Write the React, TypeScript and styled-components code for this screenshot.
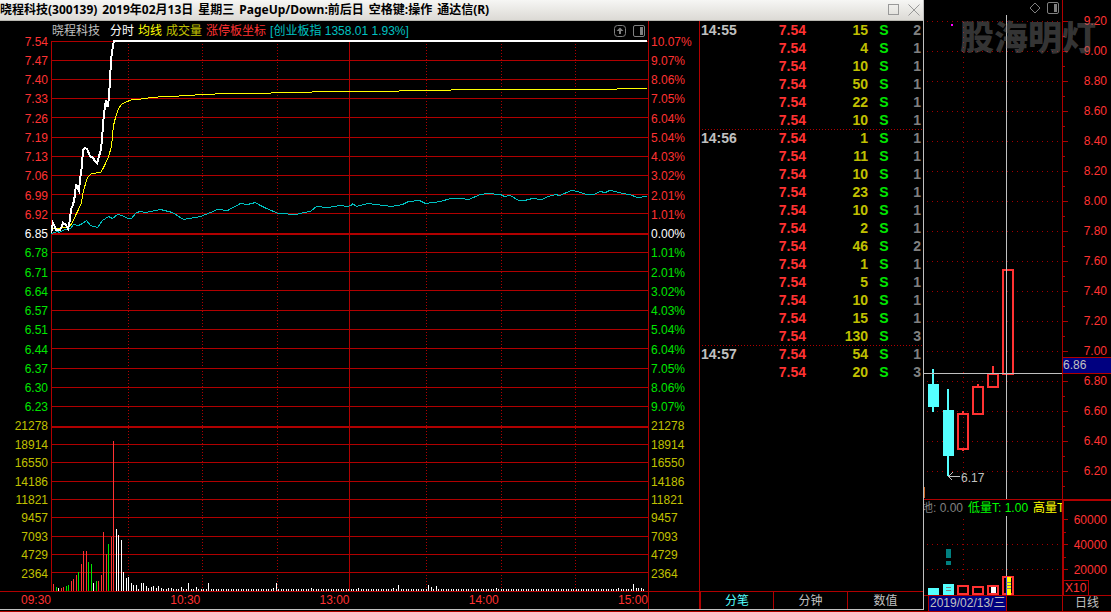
import React from "react";
import styled, { createGlobalStyle } from "styled-components";

const color = {
  grid: "#b00000",
  gridDim: "#a00000",
  up: "#ff3232",
  down: "#00e600",
  volume: "#c0c000",
  average: "#ffff00",
  index: "#00c0c0",
  cyan: "#54ffff",
  text: "#c0c0c0",
  muted: "#808080",
  navy: "#000080",
};

const GlobalStyle = createGlobalStyle`
  *, *::before, *::after { box-sizing: border-box; }
  body {
    margin: 0;
    background: #000;
    color: ${color.text};
    font: 12px/16px "Liberation Sans", "Noto Sans CJK SC", sans-serif;
  }
  button { font: inherit; color: inherit; background: none; border: 0; padding: 0; margin: 0; }
`;

/* ---------- data ---------- */

const titleParts = [
  "晓程科技(300139)",
  "2019年02月13日",
  "星期三",
  "PageUp/Down:前后日",
  "空格键:操作",
  "通达信(R)",
];

const priceLabels = [
  "7.54", "7.47", "7.40", "7.33", "7.26", "7.19", "7.13", "7.06", "6.99", "6.92",
  "6.85", "6.78", "6.71", "6.64", "6.57", "6.51", "6.44", "6.37", "6.30", "6.23",
];
const percentLabels = [
  "10.07%", "9.07%", "8.06%", "7.05%", "6.04%", "5.04%", "4.03%", "3.02%", "2.01%", "1.01%",
  "0.00%", "1.01%", "2.01%", "3.02%", "4.03%", "5.04%", "6.04%", "7.05%", "8.06%", "9.07%",
];
const volumeLabels = ["21278", "18914", "16550", "14186", "11821", "9457", "7093", "4729", "2364"];
const timeLabels = ["09:30", "10:30", "13:00", "14:00", "15:00"];

type Trade = { time?: string; volume: number; count: number };
const trades: Trade[] = [
  { time: "14:55", volume: 15, count: 2 },
  { volume: 4, count: 1 },
  { volume: 10, count: 1 },
  { volume: 50, count: 1 },
  { volume: 22, count: 1 },
  { volume: 10, count: 1 },
  { time: "14:56", volume: 1, count: 1 },
  { volume: 11, count: 1 },
  { volume: 10, count: 1 },
  { volume: 23, count: 1 },
  { volume: 10, count: 1 },
  { volume: 2, count: 1 },
  { volume: 46, count: 2 },
  { volume: 1, count: 1 },
  { volume: 5, count: 1 },
  { volume: 10, count: 1 },
  { volume: 15, count: 1 },
  { volume: 130, count: 3 },
  { time: "14:57", volume: 54, count: 1 },
  { volume: 20, count: 3 },
];

const priceGrid = [41, 60, 79, 98, 117, 137, 156, 175, 194, 213, 252, 271, 290, 310, 329, 348, 368, 387, 406];
const volumeGrid = [444, 462, 481, 499, 517, 536, 554, 572];
const halfHours = [128, 202, 277, 426, 501, 575];

const priceLine =
  "51,233 53,223 55,227 56,230 60,230 62,226 63,223 66,225 68,229 70,220 71,209 73,205 75,195 76,184 78,189 79,191 80,180 82,165 83,150 85,148 87,149 90,156 93,158 95,161 97,163 98,160 101,149 102,140 103,125 104,114 105,107 106,100 107,106 108,106 109,96 110,80 111,60 113,45 114,41 647,41";
const averageLine =
  "53,228 68,227 72,222 75,215 78,209 81,202 83,190 87,177 91,173 100,172 102,169 105,163 108,156 111,146 112,135 113,125 115,117 118,108 121,104 126,101 130,100 131,99 140,99 141,98 147,98 148,97 157,97 158,96 178,96 179,95 194,95 195,94 214,94 215,93 270,93 271,92 311,92 312,91 398,91 399,90 450,90 451,89 616,89 617,88 646,88";
const indexLine =
  "51,233 57,231 59,232 64,229 70,228 73,224 78,225 82,223 86,220 90,225 97,227 102,220 108,216 112,218 117,214 122,215 127,218 131,218 136,212 140,211 145,212 160,209 172,212 183,219 200,216 210,212 217,209 227,210 240,203 247,204 255,202 258,204 266,208 278,213 296,214 303,212 310,211 316,206 327,207 340,205 346,206 351,205 352,203 356,206 367,203 384,205 391,206 402,204 408,201 419,200 425,203 440,201 450,198 460,198 468,199 480,194 487,193 500,194 504,196 510,195 518,200 524,200 532,198 541,199 548,196 555,194 559,195 571,190 577,191 586,194 594,194 599,191 605,192 609,190 615,191 622,193 629,194 637,197 647,196";

type Bar = [x: number, top: number, kind: "r" | "g" | "w"];
const openingBars: Bar[] = [
  [53, 584, "r"], [56, 587, "g"], [58, 588, "w"], [61, 588, "r"], [63, 587, "r"], [66, 586, "g"],
  [68, 585, "g"], [71, 581, "r"], [73, 579, "r"], [76, 575, "r"], [78, 572, "g"], [81, 564, "r"],
  [83, 551, "r"], [86, 551, "r"], [88, 562, "g"], [91, 564, "g"], [93, 583, "w"], [96, 581, "g"],
  [98, 581, "r"], [101, 575, "r"], [103, 532, "r"], [106, 554, "r"], [108, 544, "g"], [111, 537, "r"],
  [113, 441, "r"], [116, 529, "w"], [118, 535, "w"], [121, 540, "w"], [123, 572, "w"], [126, 578, "w"],
  [128, 577, "w"], [131, 583, "w"], [133, 585, "w"], [136, 585, "w"], [138, 589, "w"], [141, 583, "w"],
  [143, 583, "w"], [146, 586, "w"], [148, 588, "w"], [151, 587, "w"], [153, 586, "w"], [156, 588, "w"],
  [158, 586, "w"], [161, 588, "w"], [163, 589, "w"], [166, 589, "w"], [168, 588, "w"],
];
const spikes: Record<number, number> = {
  171: 588, 181: 587, 188: 583, 196: 587, 208: 583, 216: 589, 273: 588, 276: 583, 283: 589, 311: 588,
  358: 588, 393: 588, 398: 585, 428: 585, 431: 587, 436: 586, 496: 588, 618: 588, 633: 584, 636: 588,
  638: 588, 641: 588,
};
const quietBars: Bar[] = Array.from({ length: 190 }, (_, i): Bar => {
  const x = Math.ceil(170.5 + i * 2.5);
  return [x, spikes[x] ?? 589, "w"];
});
const barFill = { r: color.up, g: color.down, w: "#fff" };

const klineLabels = [
  "9.20", "9.00", "8.80", "8.60", "8.40", "8.20", "8.00", "7.80",
  "7.60", "7.40", "7.20", "7.00", "6.80", "6.60", "6.40", "6.20",
];

/* ---------- frame ---------- */

const Page = styled.main`
  display: grid;
  grid-template-columns: minmax(0, 1fr) 187px;
  min-height: 100vh;
  background: #000;
  border-bottom: 1px solid ${color.grid};
`;

const IntradayWindow = styled.section`
  display: flex;
  flex-direction: column;
  margin-bottom: 1px;
  border-right: 1px solid ${color.text};
  border-bottom: 1px solid ${color.text};
`;

const TitleBar = styled.header`
  display: flex;
  align-items: center;
  justify-content: space-between;
  height: 21px;
  padding-right: 3px;
  background: linear-gradient(#f6f6f4, #dcdad5);
  border-bottom: 1px solid #b8b6b0;
`;

const Title = styled.h1`
  display: flex;
  gap: 5px;
  margin: 0;
  color: #000;
  font: 700 12px/20px "Noto Sans", "Noto Sans CJK SC", sans-serif;
  white-space: nowrap;
`;

const WindowButtons = styled.div`
  display: flex;
  gap: 9px;
`;

const IconButton = styled.button`
  display: flex;
  color: ${color.muted};
`;

const WindowBody = styled.div`
  flex: 1;
  display: grid;
  grid-template-columns: 51px minmax(0, 1fr) 51px 224px;
  grid-template-rows: minmax(0, 1fr) 18px;
`;

/* ---------- intraday chart ---------- */

const Axis = styled.div<{ $side: "left" | "right" }>`
  display: flex;
  flex-direction: column;
  padding: 11px ${(p) => (p.$side === "left" ? "3px" : "0")} 8px ${(p) => (p.$side === "left" ? "0" : "2px")};
  text-align: ${(p) => (p.$side === "left" ? "right" : "left")};
  border-left: ${(p) => (p.$side === "left" ? "0" : `1px solid ${color.grid}`)};
`;

const Scale = styled.ol<{ $grow: number }>`
  flex: ${(p) => p.$grow} 1 0;
  display: grid;
  grid-auto-rows: 1fr;
  align-items: center;
  margin: 0;
  padding: 0;
  list-style: none;
`;

const ScaleLabel = styled.li<{ $color: string }>`
  height: 14px;
  line-height: 14px;
  color: ${(p) => p.$color};
`;

const ChartColumn = styled.div`
  display: flex;
  flex-direction: column;
`;

const Legend = styled.div`
  display: flex;
  align-items: center;
  justify-content: space-between;
  height: 19px;
  padding: 0 3px 0 1px;
`;

const LegendTexts = styled.div`
  display: flex;
  gap: 4px;
  white-space: nowrap;
`;

const LegendText = styled.span<{ $color: string }>`
  color: ${(p) => p.$color};
`;

const StockName = styled(LegendText)`
  padding-right: 6px;
`;

const LegendTools = styled.div`
  display: flex;
  gap: 7px;
`;

const ChartSvg = styled.svg`
  display: block;
  flex: 1 1 0;
  width: 100%;
  min-height: 0;
`;

const TimeAxis = styled.div`
  grid-column: 1 / 3;
  display: grid;
  grid-template-columns: 51px repeat(4, 1fr);
  border-top: 1px solid ${color.grid};
  color: ${color.up};
  text-align: right;
`;

const AxisFooter = styled.div`
  border-top: 1px solid ${color.grid};
  border-left: 1px solid ${color.grid};
`;

/* ---------- trades ---------- */

const Trades = styled.div`
  border-left: 1px solid ${color.grid};
`;

const TradeTable = styled.table`
  width: 100%;
  table-layout: fixed;
  border-collapse: collapse;
  font-size: 14px;
  font-weight: 700;
`;

const TradeRow = styled.tr<{ $divided: boolean }>`
  height: 18px;
  background: ${(p) =>
    p.$divided
      ? `repeating-linear-gradient(90deg, ${color.grid} 0 1px, transparent 1px 3px) 2px 0 / 100% 1px no-repeat`
      : "none"};
`;

const Cell = styled.td<{ $color: string; $align?: "left" | "right" | "center" }>`
  padding: 0;
  line-height: 18px;
  color: ${(p) => p.$color};
  text-align: ${(p) => p.$align ?? "right"};
`;

const TimeCell = styled(Cell)`
  padding-left: 1px;
`;

const CountCell = styled(Cell)`
  padding-right: 2px;
`;

const Tabs = styled.nav`
  display: grid;
  grid-template-columns: 74fr 74fr 76fr;
  border-top: 1px solid ${color.grid};
`;

const Tab = styled.button<{ $active?: boolean }>`
  padding-top: 2px;
  line-height: 15px;
  color: ${(p) => (p.$active ? color.cyan : color.text)};
  border-left: ${(p) => (p.$active ? 2 : 1)}px solid ${color.grid};
`;

/* ---------- daily k-line ---------- */

const KlinePanel = styled.section`
  position: relative;
  display: grid;
  grid-template-columns: 138px minmax(0, 1fr);
  grid-template-rows: minmax(0, 1fr) 97px 15px;
  overflow: hidden;
`;

const Plot = styled.div`
  position: relative;
  display: flex;
  min-width: 0;
`;

const KlineAxis = styled.div`
  position: relative;
  display: flex;
  border-left: 1px solid ${color.grid};
`;

const Ticks = styled.svg`
  flex: 0 0 6px;
  width: 6px;
  height: 100%;
`;

const KlineScale = styled(Scale)`
  padding: 6px 4px 13px 0;
  text-align: right;
`;

const PriceTag = styled.div`
  position: absolute;
  top: 357px;
  left: 0;
  right: 0;
  height: 17px;
  line-height: 15px;
  background: ${color.navy};
  border: solid ${color.grid};
  border-width: 1px 0;
`;

const LowMark = styled.span`
  position: absolute;
  top: 470px;
  left: 37px;
`;

const Watermark = styled.div`
  position: absolute;
  top: 14px;
  left: 36px;
  font: 900 34px/44px "Noto Sans CJK SC", sans-serif;
  color: rgba(120, 120, 120, 0.45);
  white-space: nowrap;
`;

const KlineTools = styled.div`
  position: absolute;
  top: 2px;
  right: 52px;
  display: flex;
  gap: 6px;
`;

const IndicatorPlot = styled(Plot)`
  flex-direction: column;
  border-top: 1px solid ${color.grid};
  border-bottom: 1px solid ${color.grid};
`;

const IndicatorLegend = styled.div`
  display: flex;
  flex: 0 0 16px;
  gap: 5px;
  margin-left: -3px;
  overflow: hidden;
  white-space: nowrap;
`;

const IndicatorAxis = styled.div`
  display: flex;
  border: solid ${color.grid};
  border-width: 2px 0 1px 2px;
  position: relative;
`;

const IndicatorScale = styled(Scale)`
  padding: 6px 4px 13px 0;
  text-align: right;
`;

const Multiplier = styled.span`
  position: absolute;
  left: 0;
  bottom: 0;
  width: 25px;
  height: 15px;
  padding-left: 1px;
  line-height: 14px;
  color: ${color.up};
  background: #000;
  border: solid ${color.grid};
  border-width: 1px 1px 0 0;
`;

const DateRow = styled.div`
  padding-left: 4px;
`;

const DateTag = styled.div`
  width: 79px;
  height: 15px;
  line-height: 15px;
  padding-left: 1px;
  white-space: nowrap;
  background: ${color.navy};
  border: solid ${color.grid};
  border-width: 0 1px;
`;

const PeriodButton = styled.button`
  line-height: 15px;
  border-left: 1px solid ${color.grid};
`;

/* ---------- icons ---------- */

const PanelIcon = () => (
  <svg width="12" height="12" viewBox="0 0 12 12" fill="none" stroke="currentColor">
    <rect x="0.5" y="0.5" width="11" height="11" rx="1.5" />
    <rect x="7" y="2" width="3" height="8" fill="currentColor" stroke="none" />
  </svg>
);

const UpIcon = () => (
  <svg width="12" height="12" viewBox="0 0 12 12" fill="none" stroke="currentColor">
    <rect x="0.5" y="0.5" width="11" height="11" rx="3" />
    <path d="M6 2.5 L9.5 6 H7 V9 H5 V6 H2.5 Z" fill="currentColor" stroke="none" />
  </svg>
);

const DiamondIcon = () => (
  <svg width="12" height="12" viewBox="0 0 12 12" fill="none" stroke="currentColor">
    <path d="M6 1 L11 6 L6 11 L1 6 Z" />
  </svg>
);

const SquareIcon = () => (
  <svg width="11" height="11" viewBox="0 0 11 11" fill="none" stroke="#999">
    <rect x="0.5" y="0.5" width="10" height="10" />
  </svg>
);

const CloseIcon = () => (
  <svg width="12" height="12" viewBox="0 0 12 12" fill="none" stroke="#999">
    <path d="M0.5 0.5 L11.5 11.5 M11.5 0.5 L0.5 11.5" />
  </svg>
);

/* ---------- parts ---------- */

const bandColor = (i: number) => (i < 10 ? color.up : i === 10 ? "#fff" : color.down);

function PriceAxis({ side, labels }: { side: "left" | "right"; labels: string[] }) {
  return (
    <Axis $side={side}>
      <Scale $grow={385}>
        {labels.map((label, i) => (
          <ScaleLabel key={i} $color={bandColor(i)}>{label}</ScaleLabel>
        ))}
      </Scale>
      <Scale $grow={166}>
        {volumeLabels.map((label) => (
          <ScaleLabel key={label} $color={color.volume}>{label}</ScaleLabel>
        ))}
      </Scale>
    </Axis>
  );
}

function IntradayChart() {
  return (
    <ChartSvg viewBox="51 40 597 551" preserveAspectRatio="none" shapeRendering="crispEdges" fill="none">
      <g stroke={color.grid}>
        {[...priceGrid, ...volumeGrid].map((y) => (
          <line key={y} x1="51" x2="648" y1={y + 0.5} y2={y + 0.5} />
        ))}
        <line x1="51" x2="648" y1="234" y2="234" strokeWidth="2" />
        <line x1="51" x2="648" y1="427" y2="427" strokeWidth="2" />
        <line x1="51.5" x2="51.5" y1="41" y2="591" />
        <line x1="349.5" x2="349.5" y1="41" y2="591" />
        {halfHours.map((x) => (
          <line key={x} x1={x + 0.5} x2={x + 0.5} y1="44" y2="591" strokeDasharray="1 2" />
        ))}
      </g>
      {[...openingBars, ...quietBars].map(([x, top, kind]) => (
        <rect key={x} x={x} y={top} width="1" height={591 - top} fill={barFill[kind]} />
      ))}
      <g transform="translate(0.5 0.5)">
        <polyline points={indexLine} stroke={color.index} />
        <polyline points={averageLine} stroke={color.average} />
      </g>
      <polyline points={priceLine} stroke="#fff" strokeWidth="2" />
    </ChartSvg>
  );
}

function TradeList() {
  return (
    <Trades>
      <TradeTable aria-label="分笔">
        <colgroup>
          <col width="56" />
          <col width="50" />
          <col width="62" />
          <col width="32" />
          <col width="23" />
        </colgroup>
        <tbody>
          {trades.map((t, i) => (
            <TradeRow key={i} $divided={i > 0 && !!t.time}>
              <TimeCell $color={color.text} $align="left">{t.time}</TimeCell>
              <Cell $color={color.up}>7.54</Cell>
              <Cell $color={color.volume}>{t.volume}</Cell>
              <Cell $color={color.down} $align="center">S</Cell>
              <CountCell $color={color.muted}>{t.count}</CountCell>
            </TradeRow>
          ))}
        </tbody>
      </TradeTable>
    </Trades>
  );
}

function KlineChart() {
  const rows = klineLabels.map((_, i) => 21.5 + i * 30);
  return (
    <ChartSvg viewBox="924 0 138 499" preserveAspectRatio="none" shapeRendering="crispEdges" fill="none">
      <g stroke={color.gridDim}>
        {rows.map((y) => (
          <line key={y} x1="927" x2="1062" y1={y} y2={y} strokeDasharray="1 4" />
        ))}
        <line x1="963.5" x2="963.5" y1="22" y2="484" strokeDasharray="1 4" />
      </g>
      <rect x="951" y="24" width="2" height="2" fill="#ff00ff" />
      <rect x="924" y="487" width="1" height="11" fill="#c86420" />
      <g fill={color.cyan}>
        <rect x="932" y="369" width="2" height="43" />
        <rect x="928" y="384" width="11" height="23" />
        <rect x="947" y="389" width="2" height="87" />
        <rect x="943" y="410" width="11" height="46" />
      </g>
      <g stroke={color.up} strokeWidth="2">
        <rect x="958" y="414" width="10" height="35" />
        <path d="M963 411 V413 M963 450 V451" />
        <rect x="973" y="387" width="10" height="27" />
        <path d="M978 384 V386" />
        <rect x="988" y="374" width="10" height="13" />
        <path d="M993 366 V373" />
        <rect x="1003" y="270" width="10" height="104" />
      </g>
      <g stroke={color.text}>
        <path d="M1006.5 15 V499 M924 373.5 H1062" />
        <path d="M948 476.5 H960 M948.5 476.5 L952.5 472.5 M948.5 476.5 L952.5 480.5" />
      </g>
    </ChartSvg>
  );
}

function IndicatorChart() {
  return (
    <ChartSvg viewBox="924 516 138 79" preserveAspectRatio="none" shapeRendering="crispEdges" fill="none">
      <g stroke={color.gridDim} strokeDasharray="1 4">
        <path d="M927 544.5 H1062" />
        <path d="M927 569.5 H1062" />
        <path d="M963.5 519 V584" />
      </g>
      <g fill="#008080">
        <rect x="946" y="549" width="5" height="9" />
        <rect x="946" y="561" width="5" height="4" />
      </g>
      <g fill={color.cyan}>
        <rect x="928" y="588" width="11" height="7" />
        <rect x="943" y="584" width="11" height="11" />
      </g>
      <path d="M946 587.5 H951 M946 590.5 H951" stroke={color.muted} />
      <rect x="991" y="587" width="5" height="8" fill="#fff" />
      <g stroke={color.up} strokeWidth="2">
        <rect x="958" y="586" width="10" height="8" />
        <rect x="973" y="587" width="10" height="7" />
        <rect x="988" y="586" width="10" height="8" />
        <rect x="1003" y="577" width="10" height="17" />
      </g>
      <path d="M1006.5 516 V576" stroke={color.text} />
      <path d="M1006.5 577 V595" stroke="#4040ff" />
      <rect x="1007" y="577" width="4" height="18" fill={color.average} />
      <path d="M1006 582.5 H1011 M1006 585.5 H1011 M1006 588.5 H1011" stroke={color.muted} />
    </ChartSvg>
  );
}

function Kline() {
  return (
    <KlinePanel>
      <Plot>
        <KlineChart />
        <LowMark>6.17</LowMark>
      </Plot>
      <KlineAxis>
        <Ticks viewBox="0 0 6 499" preserveAspectRatio="none" shapeRendering="crispEdges" stroke={color.grid}>
          {klineLabels.map((label, i) => (
            <path key={label} d={`M0 ${21.5 + i * 30} H5 M0 ${36.5 + i * 30} H2`} />
          ))}
        </Ticks>
        <KlineScale $grow={1}>
          {klineLabels.map((label) => (
            <ScaleLabel key={label} $color={color.up}>{label}</ScaleLabel>
          ))}
        </KlineScale>
        <PriceTag>6.86</PriceTag>
      </KlineAxis>
      <IndicatorPlot>
        <IndicatorLegend>
          <LegendText $color={color.muted}>地: 0.00</LegendText>
          <LegendText $color="#00ff00">低量T: 1.00</LegendText>
          <LegendText $color={color.average}>高量T</LegendText>
        </IndicatorLegend>
        <IndicatorChart />
      </IndicatorPlot>
      <IndicatorAxis>
        <Ticks viewBox="0 0 6 94" preserveAspectRatio="none" shapeRendering="crispEdges" stroke={color.grid}>
          <path d="M0 18.5 H4 M0 31.5 H2 M0 43.5 H4 M0 56.5 H2 M0 68.5 H4" />
        </Ticks>
        <IndicatorScale $grow={1}>
          {["60000", "40000", "20000"].map((label) => (
            <ScaleLabel key={label} $color={color.up}>{label}</ScaleLabel>
          ))}
        </IndicatorScale>
        <Multiplier>X10</Multiplier>
      </IndicatorAxis>
      <DateRow>
        <DateTag>2019/02/13/三</DateTag>
      </DateRow>
      <PeriodButton type="button">日线</PeriodButton>
      <KlineTools>
        <IconButton type="button" aria-label="标记"><DiamondIcon /></IconButton>
        <IconButton type="button" aria-label="侧栏"><PanelIcon /></IconButton>
      </KlineTools>
      <Watermark>股海明灯</Watermark>
    </KlinePanel>
  );
}

export default function App() {
  return (
    <>
      <GlobalStyle />
      <Page>
        <IntradayWindow>
          <TitleBar>
            <Title>
              {titleParts.map((part) => (
                <span key={part}>{part}</span>
              ))}
            </Title>
            <WindowButtons>
              <IconButton type="button" aria-label="最大化"><SquareIcon /></IconButton>
              <IconButton type="button" aria-label="关闭"><CloseIcon /></IconButton>
            </WindowButtons>
          </TitleBar>
          <WindowBody>
            <PriceAxis side="left" labels={priceLabels} />
            <ChartColumn>
              <Legend>
                <LegendTexts>
                  <StockName $color={color.text}>晓程科技</StockName>
                  <LegendText $color="#fff">分时</LegendText>
                  <LegendText $color={color.average}>均线</LegendText>
                  <LegendText $color={color.volume}>成交量</LegendText>
                  <LegendText $color={color.up}>涨停板坐标</LegendText>
                  <LegendText $color={color.index}>[创业板指 1358.01 1.93%]</LegendText>
                </LegendTexts>
                <LegendTools>
                  <IconButton type="button" aria-label="上移"><UpIcon /></IconButton>
                  <IconButton type="button" aria-label="侧栏"><PanelIcon /></IconButton>
                </LegendTools>
              </Legend>
              <IntradayChart />
            </ChartColumn>
            <PriceAxis side="right" labels={percentLabels} />
            <TradeList />
            <TimeAxis>
              {timeLabels.map((time) => (
                <span key={time}>{time}</span>
              ))}
            </TimeAxis>
            <AxisFooter />
            <Tabs>
              <Tab type="button" $active>分笔</Tab>
              <Tab type="button">分钟</Tab>
              <Tab type="button">数值</Tab>
            </Tabs>
          </WindowBody>
        </IntradayWindow>
        <Kline />
      </Page>
    </>
  );
}
